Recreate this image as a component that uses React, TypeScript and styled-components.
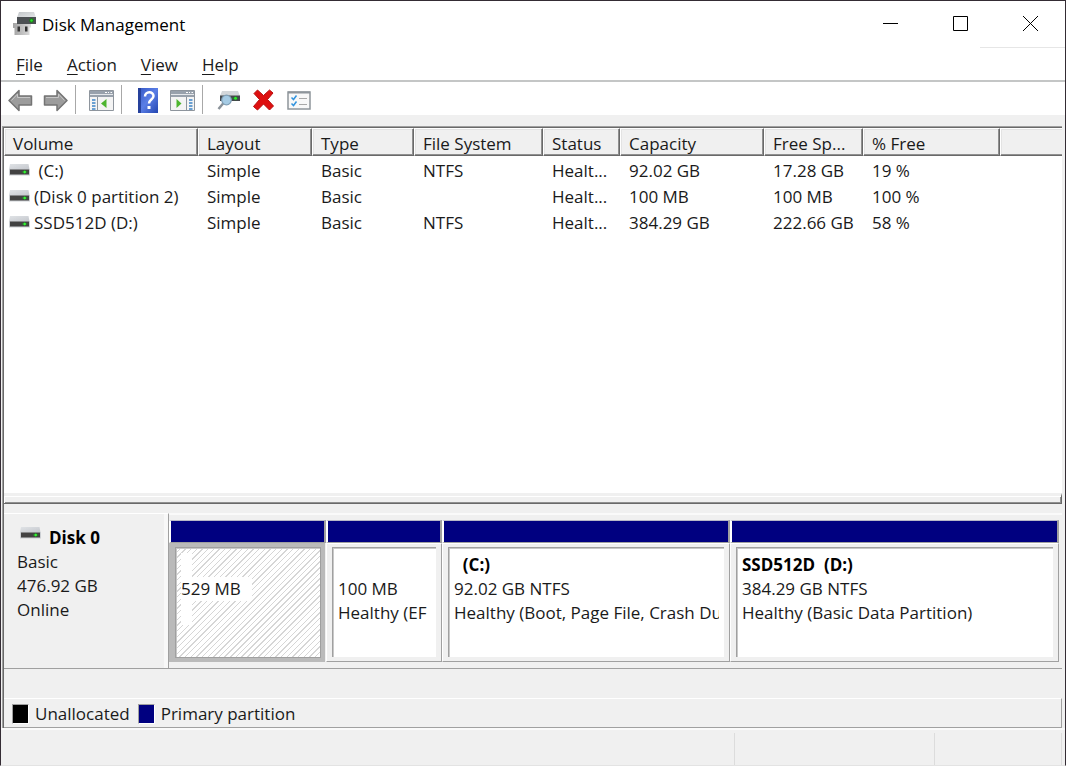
import React from "react";
import styled, { createGlobalStyle, css } from "styled-components";

const GlobalStyle = createGlobalStyle`
  *, *::before, *::after { box-sizing: border-box; }
  body { margin: 0; background: #fff; }
  button { font: inherit; color: inherit; border: 0; padding: 0; background: none; }
`;

const Page = styled.div`
  min-height: 100vh;
  padding: 0 4px 6px 0;
  display: flex;
  font-family: "Open Sans", "Segoe UI", sans-serif;
  font-size: 17px;
  line-height: 24px;
  color: #1a1a1a;
`;

const Window = styled.main`
  flex: 1;
  min-width: 0;
  display: flex;
  flex-direction: column;
  background: #f0f0f0;
  border: 1px solid #342c34;
  border-bottom-color: #e3e3e3;
`;

const TitleBar = styled.header`
  display: flex;
  height: 46px;
  align-items: center;
  background: #fff;
  padding-left: 11px;
`;

const Title = styled.h1`
  flex: 1;
  margin: 0 0 0 5px;
  padding-top: 1px;
  font: inherit;
  color: #000;
`;

const CaptionButton = styled.button`
  width: 70px;
  height: 46px;
  display: flex;
  align-items: center;
  justify-content: center;
  padding-bottom: 2px;
`;

const MenuBar = styled.nav`
  display: flex;
  gap: 24px;
  height: 35px;
  padding: 2px 15px 0;
  align-items: center;
  background: linear-gradient(#e6e6e6, #e6e6e6) right top / 85px 1px no-repeat #fff;
  border-bottom: 2px solid #c4c6c6;
`;

const MenuItem = styled.button`
  height: 24px;
`;

const Mnemonic = styled.u`
  text-decoration-thickness: 1px;
  text-underline-offset: 3px;
`;

const ToolBar = styled.div`
  display: flex;
  height: 33px;
  background: #fff;
  padding: 3px 0 1px;
`;

const ToolGroup = styled.div<{ $first?: boolean }>`
  display: flex;
  gap: 10px;
  padding: 0 7px 0 ${(p) => (p.$first ? 7 : 13)}px;
  border-right: 1px solid #a8a8a8;
  &:last-child { border-right: 0; }
`;

const ToolButton = styled.button`
  width: 25px;
  height: 29px;
  display: flex;
  align-items: center;
  justify-content: center;
  padding-top: 1px;
`;

const Client = styled.div`
  flex: 1;
  display: flex;
  flex-direction: column;
  margin: 11px 3px 0 1px;
  border-left: 1px solid #a0a0a0;
  border-top: 1px solid #a0a0a0;
`;

const ClientInner = styled.div`
  flex: 1;
  display: flex;
  flex-direction: column;
  border-left: 1px solid #696969;
  border-top: 1px solid #696969;
`;

const VolumePane = styled.section`
  flex: 1 0 160px;
  background: #fff;
`;

const VolumeTable = styled.table`
  width: 100%;
  table-layout: fixed;
  border-collapse: separate;
  border-spacing: 0;
`;

const HeadCell = styled.th<{ $width?: number }>`
  width: ${(p) => (p.$width ? `${p.$width}px` : "auto")};
  height: 28px;
  padding: 4px 0 0 8px;
  text-align: left;
  font-weight: 400;
  line-height: 22px;
  white-space: nowrap;
  overflow: hidden;
  background: #f0f0f0;
  border-top: 1px solid #fff;
  border-left: 1px solid #fff;
  border-bottom: 1px solid #696969;
  border-right: 1px solid #696969;
  box-shadow: inset -1px -1px #909090, inset 1px 1px #e3e3e3;
  &:last-child { border-right: 0; box-shadow: inset 0 -1px #909090, inset 1px 1px #e3e3e3; }
`;

const Row = styled.tr`
  &:first-child > td { padding-top: 3px; }
`;

const Cell = styled.td`
  padding: 0 0 2px 9px;
  line-height: 24px;
  white-space: nowrap;
  overflow: hidden;
`;

const VolumeName = styled.span`
  display: flex;
  gap: 4px;
  align-items: center;
  margin-left: -4px;
  white-space: pre;
`;

const Splitter = styled.div`
  height: 11px;
  border-top: 3px solid #f0f0f0;
  border-bottom: 1px solid #696969;
  border-right: 1px solid #696969;
  box-shadow: inset 0 1px #fff, inset 1px 0 #fff, inset -1px -1px #909090;
`;

const DiskRow = styled.section`
  display: flex;
  margin-top: 9px;
  height: 156px;
`;

const DiskLabel = styled.div`
  width: 165px;
  padding: 12px 0 0 13px;
  border-top: 1px solid #fff;
  border-right: 1px solid #a0a0a0;
  border-bottom: 1px solid #a0a0a0;
  box-shadow: inset -4px 0 #f8f8f8;
`;

const DiskTitle = styled.div`
  display: flex;
  gap: 8px;
  padding-left: 3px;
  font-weight: 700;
  color: #000;
`;

const Partitions = styled.div`
  flex: 1;
  min-width: 0;
  display: grid;
  grid-template-columns: 157fr 116fr 288fr 329fr;
  padding: 5px 3px 6px 0;
  border-top: 2px solid #fafafa;
  border-bottom: 1px solid #a0a0a0;
`;

const Partition = styled.article`
  min-width: 0;
  display: flex;
  flex-direction: column;
`;

const PartitionBar = styled.div`
  height: 23px;
  background: #000080;
  border: 1px solid #a0a0a0;
  border-left: 2px solid #fff;
  border-right-width: 2px;
  border-top: 1px solid #b8b8c8;
`;

const PartitionBody = styled.div<{ $selected?: boolean }>`
  flex: 1;
  display: flex;
  padding: 3px 5px 4px 5px;
  background: #f0f0f0;
  border: 1px solid #fff;
  border-right-color: #a0a0a0;
  border-bottom-color: #a0a0a0;
  ${(p) => p.$selected && css`
    background: #bababa;
    border-color: #bababa;
    margin-right: 1px;
    padding: 3px 3px 3px 5px;
  `}
`;

const PartitionText = styled.div<{ $selected?: boolean }>`
  flex: 1;
  min-width: 0;
  padding: 5px 5px 0 5px;
  background: #fff;
  border-left: 1px solid #a0a0a0;
  border-top: 1px solid #a0a0a0;
  box-shadow: inset 1px 1px #c8c8c8;
  ${(p) => p.$selected && css`
    border: 1px solid #a0a0a0;
    background: repeating-linear-gradient(135deg, #fff 0 3px, #d6d6d6 3px 4px);
  `}
`;

const PartitionLine = styled.div<{ $strong?: boolean; $masked?: boolean }>`
  height: 24px;
  overflow: hidden;
  white-space: pre;
  font-weight: ${(p) => (p.$strong ? 700 : 400)};
  color: ${(p) => (p.$strong ? "#000" : "#1a1a1a")};
  ${(p) => p.$masked && css`
    width: max-content;
    padding-right: 11px;
    min-width: 8px;
    background: #fff;
  `}
`;

const Legend = styled.div`
  display: flex;
  gap: 8px;
  align-items: center;
  height: 30px;
  margin-top: 29px;
  padding: 2px 8px 0;
  border: 1px solid #a0a0a0;
  border-width: 1px 1px 1px 0;
  border-top-color: #fff;
`;

const LegendItem = styled.div`
  display: flex;
  gap: 6px;
  align-items: center;
`;

const Swatch = styled.span<{ $color: string }>`
  width: 17px;
  height: 20px;
  background: ${(p) => p.$color};
  border: 1px solid #a0a0a0;
  border-right-color: #fff;
  border-bottom-color: #fff;
`;

const StatusBar = styled.footer`
  display: grid;
  grid-template-columns: 1fr 200px 127px;
  height: 37px;
  padding: 5px 3px 0 0;
  box-shadow: inset 0 2px #fafafa;
`;

const StatusCell = styled.div`
  border-right: 1px solid #dcdcdc;
`;

const DriveIcon = () => (
  <svg width="21" height="17" viewBox="0 0 21 17" aria-hidden="true">
    <defs>
      <linearGradient id="lid" x1="0" y1="0" x2="1" y2="1">
        <stop offset="0" stopColor="#e0e3e6" />
        <stop offset="1" stopColor="#c4c7cd" />
      </linearGradient>
    </defs>
    <path d="M1 1h18.500l1 5.500H0z" fill="url(#lid)" />
    <path d="M0 6h21v6.500H0z" fill="#cdd0d4" />
    <path d="M1 6.500h19v5H1z" fill="#424242" />
    <path d="M13 9h5.500M15.700 7v4" stroke="#1f941f" />
    <circle cx="15.700" cy="9" r="1.300" fill="#35f235" />
  </svg>
);

const AppIcon = () => (
  <svg width="25" height="24" viewBox="0 0 25 24" aria-hidden="true">
    <defs>
      <linearGradient id="appLid" x1="0" y1="0" x2="1" y2="1">
        <stop offset="0" stopColor="#c2c5c8" />
        <stop offset="1" stopColor="#e6e8ea" />
      </linearGradient>
      <linearGradient id="plug" x1="0" y1="0" x2="1" y2="0">
        <stop offset="0" stopColor="#a2a2a2" />
        <stop offset="1" stopColor="#dcdcdc" />
      </linearGradient>
    </defs>
    <path d="M7 0h15l2 5.500H5z" fill="url(#appLid)" />
    <path d="M5 5h19v7H5z" fill="#4c5053" />
    <circle cx="19.500" cy="8.500" r="2.200" fill="#1c7a1c" />
    <circle cx="19.500" cy="8.500" r="1.200" fill="#2be02b" />
    <path d="M1 11h4v1h14v3.500h-1.500V23H2.500v-7H1z" fill="url(#plug)" />
    <path d="M5.500 14.500h2.500v5H5.500zM13 14.500h2.500v5H13z" fill="#343434" />
  </svg>
);

const Arrow = ({ flip }: { flip?: boolean }) => (
  <svg width="25" height="23" viewBox="0 0 25 23" aria-hidden="true">
    <path
      d={flip ? "M24 11.500 14 1.500V7H1.500v9H14v5.500z" : "M1 11.500 11 1.500V7h12.500v9H11v5.500z"}
      fill="#9c9c9c"
      stroke="#747474"
      strokeWidth="1.500"
      strokeLinejoin="round"
    />
    <path d={flip ? "M3 8.500h12.500V5l6 6.500" : "M3.500 11.500l6-6.500v3.500H22"} fill="none" stroke="#c6c6c6" />
  </svg>
);

const ConsoleIcon = ({ flip }: { flip?: boolean }) => (
  <svg width="25" height="21" viewBox="0 0 25 21" aria-hidden="true">
    <path d="M.5.5h24v20H.5z" fill="#f4f4f4" stroke="#8e959d" />
    <path d="M1 1h23v3H1z" fill="#98a1ac" />
    <path d="M1 4.500h23" stroke="#e4e7ea" />
    <path d="M1 6h23" stroke="#98a1ac" strokeWidth="2" />
    <path d="M16 2.500h2M19 2.500h1M21.500 2.500h1.500" stroke="#fff" />
    <path d={flip ? "M16.500 7v13" : "M8.500 7v13"} stroke="#8e959d" />
    <path
      d={flip ? "M19 10h3.500M19 13h3.500M19 16h3.500M19 19h3.500" : "M3 10h3.500M3 13h3.500M3 16h3.500M3 19h3.500"}
      stroke="#3d84c6"
      strokeWidth="1.500"
    />
    <path d={flip ? "M6.500 9v9l5-4.500z" : "M17.500 9v9l-5.500-4.500z"} fill="#4db52f" />
  </svg>
);

const HelpIcon = () => (
  <svg width="20" height="25" viewBox="0 0 20 25" aria-hidden="true">
    <defs>
      <linearGradient id="book" x1="0" y1="0" x2="1" y2="1">
        <stop offset="0" stopColor="#3457c4" />
        <stop offset=".5" stopColor="#5a7ee6" />
        <stop offset="1" stopColor="#2446b0" />
      </linearGradient>
    </defs>
    <path d="M0 0h20v25H0z" fill="url(#book)" />
    <path d="M0 0h3v25H0z" fill="#26419c" />
    <path d="M7 8.500C7 3 15.500 3 15.500 8c0 3.500-4.500 3.500-4.500 7.500" fill="none" stroke="#fff" strokeWidth="2.500" />
    <path d="M9.500 18h3v3h-3z" fill="#fff" />
  </svg>
);

const RescanIcon = () => (
  <svg width="24" height="22" viewBox="0 0 24 22" aria-hidden="true">
    <path d="M5 2h16l2 5H3z" fill="#d3d7da" />
    <path d="M3 6.500h20V12H3z" fill="#44484c" />
    <path d="M15 9.300h6M18.500 7.300v4" stroke="#1d8a1d" />
    <circle cx="18.500" cy="9.300" r="1.500" fill="#2bea2b" />
    <path d="m6.500 14-5 6" stroke="#8a9299" strokeWidth="2.500" />
    <circle cx="9.500" cy="11" r="4.800" fill="#a5cbe4" stroke="#7f9fb6" strokeWidth="1.200" />
  </svg>
);

const DeleteIcon = () => (
  <svg width="23" height="22" viewBox="0 0 23 22" aria-hidden="true">
    <path
      d="M2 4.500 5.500 1l6 5.500 6-5.500L21 4l-5.500 6.500L21.500 17 17.500 21l-6-6-6 6L1.500 17.500l6-7z"
      fill="#de1010"
      stroke="#b80c0c"
      strokeLinejoin="round"
    />
  </svg>
);

const ChecklistIcon = () => (
  <svg width="24" height="19" viewBox="0 0 24 19" aria-hidden="true">
    <path d="M1 1h22v17H1z" fill="#f8f8f8" stroke="#8e959b" strokeWidth="1.500" />
    <path d="M1 1.500h22" stroke="#8e959b" strokeWidth="2" />
    <path d="m4.500 6.500 2 2 3-4M4.500 12.500l2 2 3-4" fill="none" stroke="#3294de" strokeWidth="1.500" />
    <path d="M12 7.500h8M12 13.500h8" stroke="#a8a8a8" />
  </svg>
);

const columns: [string, number?][] = [
  ["Volume", 194],
  ["Layout", 114],
  ["Type", 102],
  ["File System", 129],
  ["Status", 77],
  ["Capacity", 144],
  ["Free Sp...", 99],
  ["% Free", 137],
  [""],
];

const volumes = [
  [" (C:)", "Simple", "Basic", "NTFS", "Healt...", "92.02 GB", "17.28 GB", "19 %"],
  ["(Disk 0 partition 2)", "Simple", "Basic", "", "Healt...", "100 MB", "100 MB", "100 %"],
  ["SSD512D (D:)", "Simple", "Basic", "NTFS", "Healt...", "384.29 GB", "222.66 GB", "58 %"],
];

const partitions = [
  { name: "", size: "529 MB", state: "", selected: true },
  { name: "", size: "100 MB", state: "Healthy (EF" },
  { name: "  (C:)", size: "92.02 GB NTFS", state: "Healthy (Boot, Page File, Crash Dump)" },
  { name: "SSD512D  (D:)", size: "384.29 GB NTFS", state: "Healthy (Basic Data Partition)" },
];

export default function App() {
  return (
    <Page>
      <GlobalStyle />
      <Window>
        <TitleBar>
          <AppIcon />
          <Title>Disk Management</Title>
          <CaptionButton aria-label="Minimize">
            <svg width="15" height="15"><path d="M0 7.500h15" stroke="#000" /></svg>
          </CaptionButton>
          <CaptionButton aria-label="Maximize">
            <svg width="15" height="15"><path d="M.5.5h14v14H.5z" fill="none" stroke="#000" /></svg>
          </CaptionButton>
          <CaptionButton aria-label="Close">
            <svg width="15" height="15"><path d="m0 0 15 15M15 0 0 15" stroke="#000" /></svg>
          </CaptionButton>
        </TitleBar>
        <MenuBar>
          {["File", "Action", "View", "Help"].map((m) => (
            <MenuItem key={m}><Mnemonic>{m[0]}</Mnemonic>{m.slice(1)}</MenuItem>
          ))}
        </MenuBar>
        <ToolBar>
          <ToolGroup $first>
            <ToolButton aria-label="Back"><Arrow /></ToolButton>
            <ToolButton aria-label="Forward"><Arrow flip /></ToolButton>
          </ToolGroup>
          <ToolGroup>
            <ToolButton aria-label="Show console tree"><ConsoleIcon /></ToolButton>
          </ToolGroup>
          <ToolGroup>
            <ToolButton aria-label="Help"><HelpIcon /></ToolButton>
            <ToolButton aria-label="Show action pane"><ConsoleIcon flip /></ToolButton>
          </ToolGroup>
          <ToolGroup>
            <ToolButton aria-label="Rescan disks"><RescanIcon /></ToolButton>
            <ToolButton aria-label="Delete"><DeleteIcon /></ToolButton>
            <ToolButton aria-label="Properties"><ChecklistIcon /></ToolButton>
          </ToolGroup>
        </ToolBar>
        <Client>
          <ClientInner>
            <VolumePane>
              <VolumeTable>
                <thead>
                  <tr>
                    {columns.map(([label, width]) => (
                      <HeadCell key={label} $width={width} scope="col">{label}</HeadCell>
                    ))}
                  </tr>
                </thead>
                <tbody>
                  {volumes.map(([name, ...rest]) => (
                    <Row key={name}>
                      <Cell><VolumeName><DriveIcon />{name}</VolumeName></Cell>
                      {rest.map((value, i) => <Cell key={i}>{value}</Cell>)}
                    </Row>
                  ))}
                </tbody>
              </VolumeTable>
            </VolumePane>
            <Splitter />
            <DiskRow>
              <DiskLabel>
                <DiskTitle><DriveIcon />Disk 0</DiskTitle>
                <div>Basic</div>
                <div>476.92 GB</div>
                <div>Online</div>
              </DiskLabel>
              <Partitions>
                {partitions.map((p) => (
                  <Partition key={p.size}>
                    <PartitionBar />
                    <PartitionBody $selected={p.selected}>
                      <PartitionText $selected={p.selected}>
                        <PartitionLine $strong $masked={p.selected}>{p.name}</PartitionLine>
                        <PartitionLine $masked={p.selected}>{p.size}</PartitionLine>
                        <PartitionLine $masked={p.selected}>{p.state}</PartitionLine>
                      </PartitionText>
                    </PartitionBody>
                  </Partition>
                ))}
              </Partitions>
            </DiskRow>
            <Legend>
              <LegendItem><Swatch $color="#000" />Unallocated</LegendItem>
              <LegendItem><Swatch $color="#000080" />Primary partition</LegendItem>
            </Legend>
          </ClientInner>
        </Client>
        <StatusBar>
          <StatusCell />
          <StatusCell />
          <StatusCell />
        </StatusBar>
      </Window>
    </Page>
  );
}
